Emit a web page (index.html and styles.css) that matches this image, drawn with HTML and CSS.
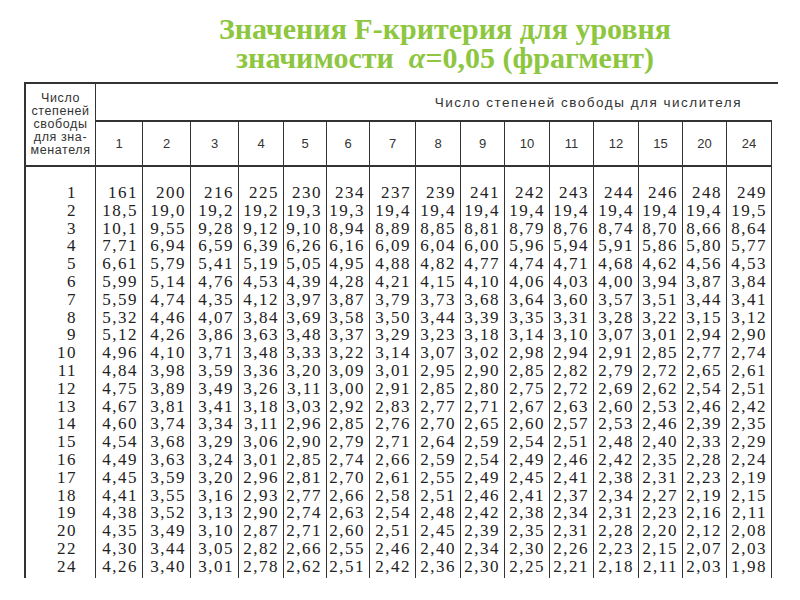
FILE: index.html
```html
<!DOCTYPE html>
<html lang="ru">
<head>
<meta charset="utf-8">
<title>Значения F-критерия</title>
<link rel="stylesheet" href="styles.css">
</head>
<body>
<h1 class="title">Значения F-критерия для уровня<br>значимости&nbsp; <i class="alpha">α</i>=0,05 (фрагмент)</h1>
<div class="sheet">
  <div class="head">
    <div class="stub">Число<br>степеней<br>свободы<br>для зна-<br>менателя</div>
    <div class="span">Число степеней свободы для числителя</div>
    <div class="n">1</div><div class="n">2</div><div class="n">3</div><div class="n">4</div><div class="n">5</div>
    <div class="n">6</div><div class="n">7</div><div class="n">8</div><div class="n">9</div><div class="n">10</div>
    <div class="n">11</div><div class="n">12</div><div class="n">15</div><div class="n">20</div><div class="n">24</div>
  </div>
  <div class="body">
    <div class="col stubcol"><span>1</span><span>2</span><span>3</span><span>4</span><span>5</span><span>6</span><span>7</span><span>8</span><span>9</span><span>10</span><span>11</span><span>12</span><span>13</span><span>14</span><span>15</span><span>16</span><span>17</span><span>18</span><span>19</span><span>20</span><span>22</span><span>24</span><span>26</span></div>
    <div class="col"><span>161</span><span>18,5</span><span>10,1</span><span>7,71</span><span>6,61</span><span>5,99</span><span>5,59</span><span>5,32</span><span>5,12</span><span>4,96</span><span>4,84</span><span>4,75</span><span>4,67</span><span>4,60</span><span>4,54</span><span>4,49</span><span>4,45</span><span>4,41</span><span>4,38</span><span>4,35</span><span>4,30</span><span>4,26</span><span>4,23</span></div>
    <div class="col"><span>200</span><span>19,0</span><span>9,55</span><span>6,94</span><span>5,79</span><span>5,14</span><span>4,74</span><span>4,46</span><span>4,26</span><span>4,10</span><span>3,98</span><span>3,89</span><span>3,81</span><span>3,74</span><span>3,68</span><span>3,63</span><span>3,59</span><span>3,55</span><span>3,52</span><span>3,49</span><span>3,44</span><span>3,40</span><span>3,37</span></div>
    <div class="col"><span>216</span><span>19,2</span><span>9,28</span><span>6,59</span><span>5,41</span><span>4,76</span><span>4,35</span><span>4,07</span><span>3,86</span><span>3,71</span><span>3,59</span><span>3,49</span><span>3,41</span><span>3,34</span><span>3,29</span><span>3,24</span><span>3,20</span><span>3,16</span><span>3,13</span><span>3,10</span><span>3,05</span><span>3,01</span><span>2,98</span></div>
    <div class="col"><span>225</span><span>19,2</span><span>9,12</span><span>6,39</span><span>5,19</span><span>4,53</span><span>4,12</span><span>3,84</span><span>3,63</span><span>3,48</span><span>3,36</span><span>3,26</span><span>3,18</span><span>3,11</span><span>3,06</span><span>3,01</span><span>2,96</span><span>2,93</span><span>2,90</span><span>2,87</span><span>2,82</span><span>2,78</span><span>2,74</span></div>
    <div class="col"><span>230</span><span>19,3</span><span>9,10</span><span>6,26</span><span>5,05</span><span>4,39</span><span>3,97</span><span>3,69</span><span>3,48</span><span>3,33</span><span>3,20</span><span>3,11</span><span>3,03</span><span>2,96</span><span>2,90</span><span>2,85</span><span>2,81</span><span>2,77</span><span>2,74</span><span>2,71</span><span>2,66</span><span>2,62</span><span>2,59</span></div>
    <div class="col"><span>234</span><span>19,3</span><span>8,94</span><span>6,16</span><span>4,95</span><span>4,28</span><span>3,87</span><span>3,58</span><span>3,37</span><span>3,22</span><span>3,09</span><span>3,00</span><span>2,92</span><span>2,85</span><span>2,79</span><span>2,74</span><span>2,70</span><span>2,66</span><span>2,63</span><span>2,60</span><span>2,55</span><span>2,51</span><span>2,47</span></div>
    <div class="col"><span>237</span><span>19,4</span><span>8,89</span><span>6,09</span><span>4,88</span><span>4,21</span><span>3,79</span><span>3,50</span><span>3,29</span><span>3,14</span><span>3,01</span><span>2,91</span><span>2,83</span><span>2,76</span><span>2,71</span><span>2,66</span><span>2,61</span><span>2,58</span><span>2,54</span><span>2,51</span><span>2,46</span><span>2,42</span><span>2,39</span></div>
    <div class="col"><span>239</span><span>19,4</span><span>8,85</span><span>6,04</span><span>4,82</span><span>4,15</span><span>3,73</span><span>3,44</span><span>3,23</span><span>3,07</span><span>2,95</span><span>2,85</span><span>2,77</span><span>2,70</span><span>2,64</span><span>2,59</span><span>2,55</span><span>2,51</span><span>2,48</span><span>2,45</span><span>2,40</span><span>2,36</span><span>2,32</span></div>
    <div class="col"><span>241</span><span>19,4</span><span>8,81</span><span>6,00</span><span>4,77</span><span>4,10</span><span>3,68</span><span>3,39</span><span>3,18</span><span>3,02</span><span>2,90</span><span>2,80</span><span>2,71</span><span>2,65</span><span>2,59</span><span>2,54</span><span>2,49</span><span>2,46</span><span>2,42</span><span>2,39</span><span>2,34</span><span>2,30</span><span>2,27</span></div>
    <div class="col"><span>242</span><span>19,4</span><span>8,79</span><span>5,96</span><span>4,74</span><span>4,06</span><span>3,64</span><span>3,35</span><span>3,14</span><span>2,98</span><span>2,85</span><span>2,75</span><span>2,67</span><span>2,60</span><span>2,54</span><span>2,49</span><span>2,45</span><span>2,41</span><span>2,38</span><span>2,35</span><span>2,30</span><span>2,25</span><span>2,22</span></div>
    <div class="col"><span>243</span><span>19,4</span><span>8,76</span><span>5,94</span><span>4,71</span><span>4,03</span><span>3,60</span><span>3,31</span><span>3,10</span><span>2,94</span><span>2,82</span><span>2,72</span><span>2,63</span><span>2,57</span><span>2,51</span><span>2,46</span><span>2,41</span><span>2,37</span><span>2,34</span><span>2,31</span><span>2,26</span><span>2,21</span><span>2,18</span></div>
    <div class="col"><span>244</span><span>19,4</span><span>8,74</span><span>5,91</span><span>4,68</span><span>4,00</span><span>3,57</span><span>3,28</span><span>3,07</span><span>2,91</span><span>2,79</span><span>2,69</span><span>2,60</span><span>2,53</span><span>2,48</span><span>2,42</span><span>2,38</span><span>2,34</span><span>2,31</span><span>2,28</span><span>2,23</span><span>2,18</span><span>2,15</span></div>
    <div class="col"><span>246</span><span>19,4</span><span>8,70</span><span>5,86</span><span>4,62</span><span>3,94</span><span>3,51</span><span>3,22</span><span>3,01</span><span>2,85</span><span>2,72</span><span>2,62</span><span>2,53</span><span>2,46</span><span>2,40</span><span>2,35</span><span>2,31</span><span>2,27</span><span>2,23</span><span>2,20</span><span>2,15</span><span>2,11</span><span>2,07</span></div>
    <div class="col"><span>248</span><span>19,4</span><span>8,66</span><span>5,80</span><span>4,56</span><span>3,87</span><span>3,44</span><span>3,15</span><span>2,94</span><span>2,77</span><span>2,65</span><span>2,54</span><span>2,46</span><span>2,39</span><span>2,33</span><span>2,28</span><span>2,23</span><span>2,19</span><span>2,16</span><span>2,12</span><span>2,07</span><span>2,03</span><span>1,99</span></div>
    <div class="col"><span>249</span><span>19,5</span><span>8,64</span><span>5,77</span><span>4,53</span><span>3,84</span><span>3,41</span><span>3,12</span><span>2,90</span><span>2,74</span><span>2,61</span><span>2,51</span><span>2,42</span><span>2,35</span><span>2,29</span><span>2,24</span><span>2,19</span><span>2,15</span><span>2,11</span><span>2,08</span><span>2,03</span><span>1,98</span><span>1,95</span></div>
  </div>
</div>
</body>
</html>
```
FILE: styles.css
```css
html, body {
  margin: 0;
  padding: 0;
  background: #ffffff;
}

.title {
  margin: 0;
  padding: 14px 0 0 90px;
  font-family: "Liberation Serif", "Times New Roman", serif;
  font-weight: bold;
  font-size: 30px;
  line-height: 29px;
  color: #8dc63f;
  text-align: center;
}

.alpha {
  font-style: italic;
}

.sheet {
  --cols: 70px 47px 48px 48px 45px 43px 43px 46px 45px 44px 45px 44px 45px 44px 44px 45px;
  margin: 10px 0 0 24px;
  width: 752px;
  height: 494px;
  overflow: hidden;
  border-top: 2px solid #333;
  border-left: 2px solid #333;
  color: #222;
}

.head {
  display: grid;
  grid-template-columns: var(--cols);
  grid-template-rows: 38px 43px;
  border-bottom: 2px solid #333;
  width: 746px;
  font-family: "Liberation Sans", sans-serif;
}

.stub {
  grid-row: 1 / 3;
  grid-column: 1;
  border-right: 1px solid #333;
  display: flex;
  align-items: center;
  justify-content: center;
  text-align: center;
  font-size: 12.5px;
  line-height: 13px;
  letter-spacing: 0.6px;
  color: #333;
}

.span {
  grid-row: 1;
  grid-column: 2 / -1;
  border-bottom: 2px solid #333;
  display: flex;
  align-items: center;
  justify-content: flex-end;
  padding-right: 30px;
  font-size: 13.5px;
  letter-spacing: 1.5px;
  color: #333;
}

.n {
  grid-row: 2;
  border-right: 1px solid #333;
  display: flex;
  align-items: center;
  justify-content: center;
  font-size: 13px;
  color: #333;
}

.body {
  display: grid;
  grid-template-columns: var(--cols);
  width: 746px;
  font-family: "Liberation Serif", serif;
  font-size: 17px;
  letter-spacing: 1.5px;
}

.col {
  border-right: 1px solid #333;
  padding-top: 17px;
  padding-right: 4px;
  text-align: right;
}

.col span {
  display: block;
  height: 17.8px;
  line-height: 17.8px;
}

.stubcol {
  padding-right: 18px;
}
```
